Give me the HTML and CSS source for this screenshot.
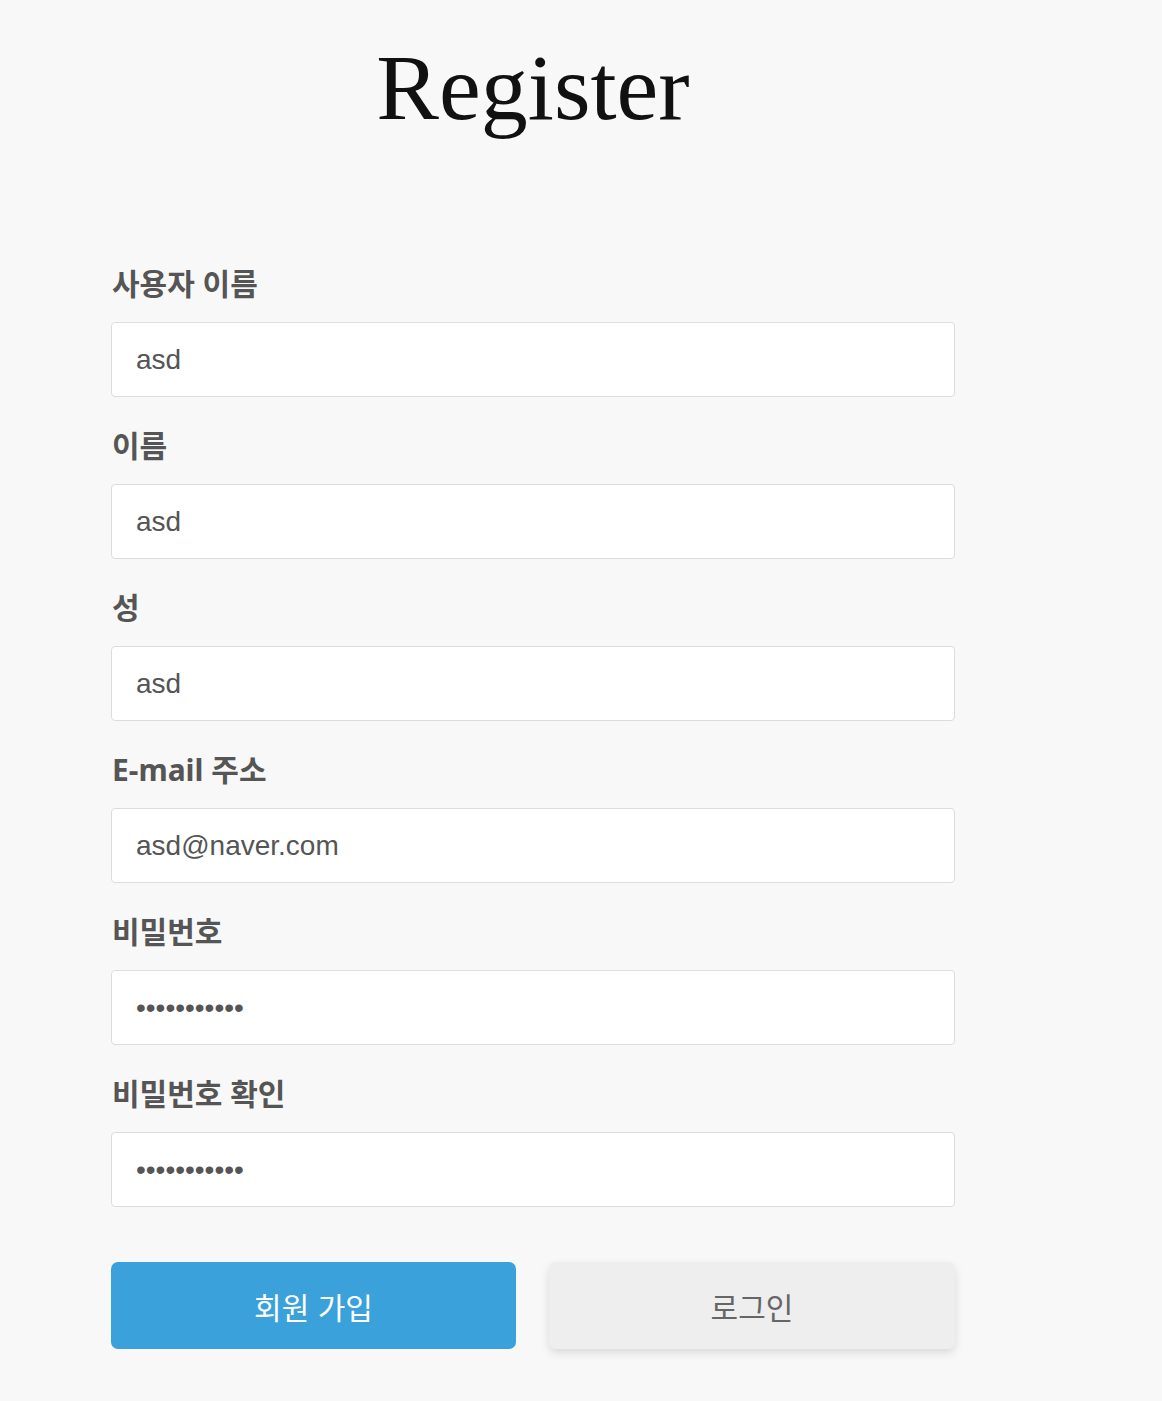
FILE: index.html
```html
<!DOCTYPE html>
<html lang="ko">
<head>
    <meta charset="UTF-8">
    <meta name="viewport" content="width=device-width, initial-scale=1.0">
    <title>Register</title>
    <link rel="stylesheet" href="styles.css">
</head>
<body>
    <div class="container">
        <h1>Register</h1>

        <form class="register-form">
            <div class="field">
                <label for="username">사용자 이름</label>
                <input type="text" id="username" value="asd">
            </div>
            <div class="field">
                <label for="first-name">이름</label>
                <input type="text" id="first-name" value="asd">
            </div>
            <div class="field">
                <label for="last-name">성</label>
                <input type="text" id="last-name" value="asd">
            </div>
            <div class="field">
                <label for="email">E-mail 주소</label>
                <input type="email" id="email" value="asd@naver.com">
            </div>
            <div class="field">
                <label for="password">비밀번호</label>
                <input type="password" id="password" value="asdasdasdas">
            </div>
            <div class="field">
                <label for="password-confirm">비밀번호 확인</label>
                <input type="password" id="password-confirm" value="asdasdasdas">
            </div>

            <!-- Buttons -->
            <div class="buttons">
                <button type="submit" class="btn btn-primary">회원 가입</button>
                <button type="button" class="btn btn-secondary">로그인</button>
            </div>
        </form>
    </div>
</body>
</html>
```

FILE: styles.css
```css
body {
    font-family: 'Noto Sans', 'Noto Sans CJK KR', sans-serif;
    background-color: #f8f8f8;
    color: #555;
    margin: 0;
    padding: 0;
}
.container {
    width: 844px;
    margin-left: 111px;
    padding-top: 32px;
    padding-bottom: 51px;
}
h1 {
    font-family: 'Liberation Serif', serif;
    font-weight: normal;
    font-size: 94px;
    line-height: 110px;
    color: #111;
    text-align: center;
    margin: 0 0 125px 0;
}
.field {
    margin-bottom: 32px;
}
label {
    display: block;
    font-size: 30px;
    line-height: 34px;
    font-weight: bold;
    color: #555;
    margin-bottom: 21px;
    padding-left: 1px;
}
input[type="text"],
input[type="email"],
input[type="password"] {
    display: block;
    box-sizing: border-box;
    width: 100%;
    height: 75px;
    padding: 0 24px;
    border: 1px solid #dcdcdc;
    border-radius: 4px;
    background: #fff;
    font-family: 'Liberation Sans', 'Noto Sans CJK KR', sans-serif;
    font-size: 28px;
    color: #555;
}
.buttons {
    display: grid;
    grid-template-columns: 405px 406px;
    gap: 33px;
    margin-top: 55px;
}
.btn {
    height: 87px;
    border: none;
    border-radius: 7px;
    font-family: 'Noto Sans CJK KR', sans-serif;
    font-size: 30px;
    cursor: pointer;
}
.btn-primary {
    background-color: #3ba1db;
    color: #fff;
}
.btn-secondary {
    background-color: #eeeeee;
    color: #666;
    box-shadow: 0 4px 10px rgba(0, 0, 0, 0.12);
}
```
